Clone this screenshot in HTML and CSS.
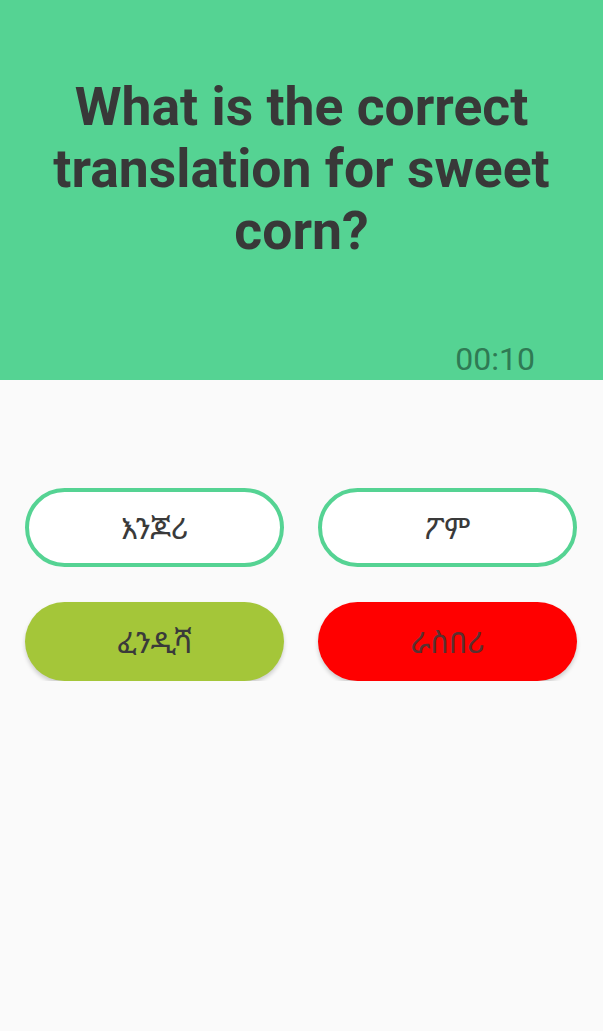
FILE: index.html
```html
<!DOCTYPE html>
<html>
<head>
<meta charset="utf-8">
<link rel="stylesheet" href="styles.css">
</head>
<body>
<header class="header">
  <h1 class="question">What is the correct translation for sweet corn?</h1>
  <div class="timer">00:10</div>
</header>
<main class="options">
  <button class="option outline">እንጆሪ</button>
  <button class="option outline">ፖም</button>
  <button class="option correct">ፈንዲሻ</button>
  <button class="option wrong">ራስበሪ</button>
</main>
</body>
</html>
```

FILE: styles.css
```css
html, body {
  margin: 0;
  padding: 0;
  background: #fafafa;
  font-family: Roboto, "Noto Sans", sans-serif;
}
.header {
  background: #55d393;
  height: 380px;
  box-sizing: border-box;
  display: flex;
  flex-direction: column;
  padding: 76px 20px 0;
}
.question {
  margin: 0;
  font-size: 53.5px;
  line-height: 62px;
  font-weight: 700;
  color: #383838;
  text-align: center;
}
.timer {
  margin-top: auto;
  align-self: flex-end;
  margin-right: 48px;
  margin-bottom: 1px;
  font-size: 32px;
  color: #2f7a54;
  line-height: 40px;
}
.options {
  display: grid;
  grid-template-columns: 1fr 1fr;
  column-gap: 34px;
  row-gap: 35px;
  padding: 108px 26px 0 25px;
}
.option {
  height: 79px;
  border-radius: 40px;
  border: none;
  font-family: "Noto Sans Ethiopic", "DejaVu Sans", sans-serif;
  font-size: 30px;
  color: #3a3a3a;
  display: flex;
  align-items: center;
  justify-content: center;
}
.outline {
  background: #ffffff;
  border: 4px solid #55d393;
}
.correct {
  background: #a4c639;
  box-shadow: 0 3px 4px rgba(0,0,0,0.18);
}
.wrong {
  background: #ff0000;
  color: #5a3030;
  box-shadow: 0 3px 4px rgba(0,0,0,0.18);
}
```
